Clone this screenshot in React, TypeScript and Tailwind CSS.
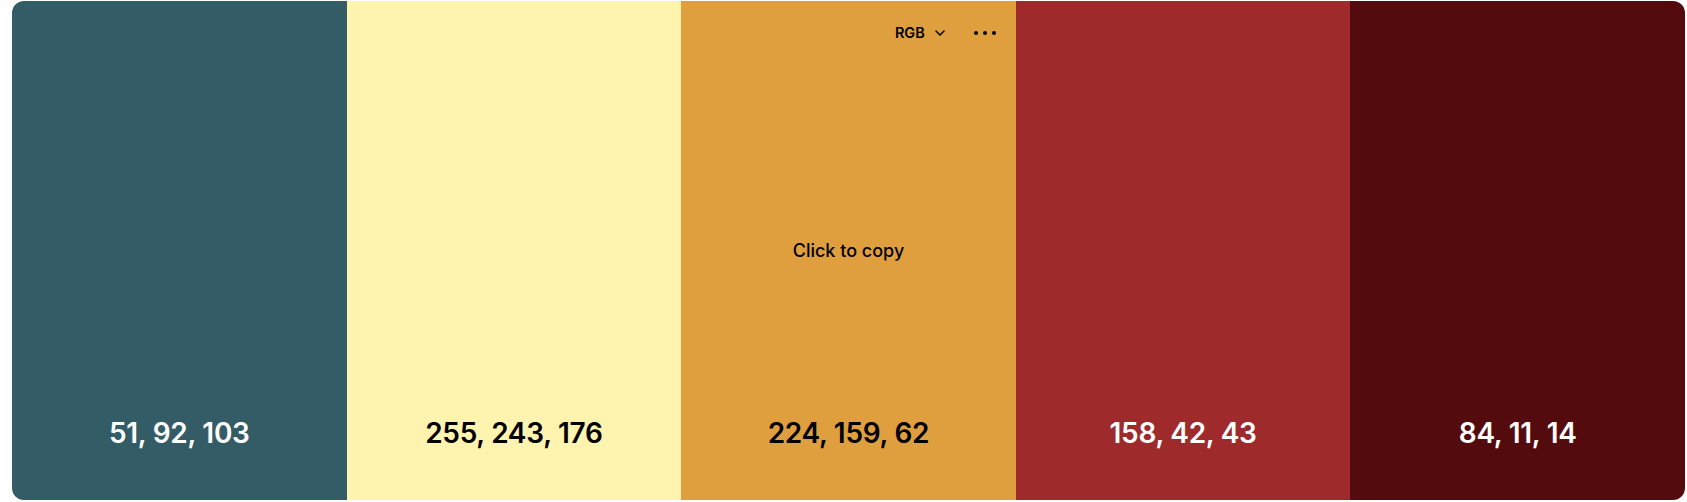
import { ChevronDown } from "lucide-react";

const SWATCHES = [
  { hex: "#335c67", rgb: "51, 92, 103", dark: true },
  { hex: "#fff3b0", rgb: "255, 243, 176", dark: false },
  { hex: "#e09f3e", rgb: "224, 159, 62", dark: false, active: true },
  { hex: "#9e2a2b", rgb: "158, 42, 43", dark: true },
  { hex: "#540b0e", rgb: "84, 11, 14", dark: true },
];

function Swatch({ hex, rgb, dark, active }: { hex: string; rgb: string; dark: boolean; active?: boolean }) {
  return (
    <div
      className="relative flex flex-1 flex-col items-center justify-end pb-[46px]"
      style={{ backgroundColor: hex }}
    >
      {active && (
        <>
          <div className="absolute right-[18px] top-[21px] flex items-center gap-[24px] text-black">
            <button type="button" className="flex items-center gap-[7px] text-[14.5px] font-semibold">
              RGB
              <ChevronDown size={16} strokeWidth={2.25} />
            </button>
            <div className="flex items-center gap-[5px] px-[2px]">
              <span className="h-[4px] w-[4px] rounded-full bg-black" />
              <span className="h-[4px] w-[4px] rounded-full bg-black" />
              <span className="h-[4px] w-[4px] rounded-full bg-black" />
            </div>
          </div>
          <div className="absolute inset-0 flex items-center justify-center text-[18px] font-medium text-black">
            Click to copy
          </div>
        </>
      )}
      <span className={`text-[28px] font-semibold tracking-[-0.01em] ${dark ? "text-white" : "text-black"}`}>
        {rgb}
      </span>
    </div>
  );
}

export default function App() {
  return (
    <div className="bg-white pb-[2px] pl-3 pr-[2px] pt-[1px]" style={{ fontFamily: "Inter, 'Noto Sans', sans-serif" }}>
      <div className="flex h-[499px] overflow-hidden rounded-[12px]">
        {SWATCHES.map((s) => (
          <Swatch key={s.hex} {...s} />
        ))}
      </div>
    </div>
  );
}
